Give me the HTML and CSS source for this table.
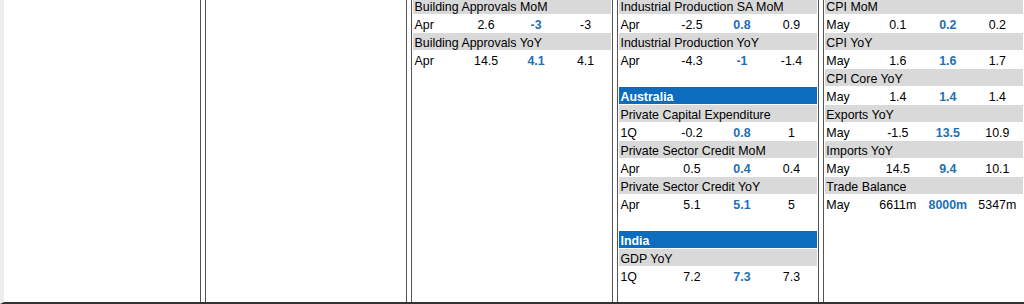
FILE: index.html
```html
<!DOCTYPE html>
<html>
<head>
<meta charset="utf-8">
<link rel="stylesheet" href="styles.css">
</head>
<body>
<div class="board">
  <div class="col col-first"></div>
  <div class="col"></div>
  <div class="col">
    <div class="stack">
      <div class="hd">Building Approvals MoM</div>
      <div class="dr"><span class="p">Apr</span><span>2.6</span><span class="f">-3</span><span>-3</span></div>
      <div class="hd">Building Approvals YoY</div>
      <div class="dr"><span class="p">Apr</span><span>14.5</span><span class="f">4.1</span><span>4.1</span></div>
    </div>
  </div>
  <div class="col">
    <div class="stack">
      <div class="hd">Industrial Production SA MoM</div>
      <div class="dr"><span class="p">Apr</span><span>-2.5</span><span class="f">0.8</span><span>0.9</span></div>
      <div class="hd">Industrial Production YoY</div>
      <div class="dr"><span class="p">Apr</span><span>-4.3</span><span class="f">-1</span><span>-1.4</span></div>
      <div class="sp"></div>
      <div class="rg">Australia</div>
      <div class="hd">Private Capital Expenditure</div>
      <div class="dr"><span class="p">1Q</span><span>-0.2</span><span class="f">0.8</span><span>1</span></div>
      <div class="hd">Private Sector Credit MoM</div>
      <div class="dr"><span class="p">Apr</span><span>0.5</span><span class="f">0.4</span><span>0.4</span></div>
      <div class="hd">Private Sector Credit YoY</div>
      <div class="dr"><span class="p">Apr</span><span>5.1</span><span class="f">5.1</span><span>5</span></div>
      <div class="sp"></div>
      <div class="rg">India</div>
      <div class="hd">GDP YoY</div>
      <div class="dr"><span class="p">1Q</span><span>7.2</span><span class="f">7.3</span><span>7.3</span></div>
    </div>
  </div>
  <div class="col col-last">
    <div class="stack">
      <div class="hd">CPI MoM</div>
      <div class="dr"><span class="p">May</span><span>0.1</span><span class="f">0.2</span><span>0.2</span></div>
      <div class="hd">CPI YoY</div>
      <div class="dr"><span class="p">May</span><span>1.6</span><span class="f">1.6</span><span>1.7</span></div>
      <div class="hd">CPI Core YoY</div>
      <div class="dr"><span class="p">May</span><span>1.4</span><span class="f">1.4</span><span>1.4</span></div>
      <div class="hd">Exports YoY</div>
      <div class="dr"><span class="p">May</span><span>-1.5</span><span class="f">13.5</span><span>10.9</span></div>
      <div class="hd">Imports YoY</div>
      <div class="dr"><span class="p">May</span><span>14.5</span><span class="f">9.4</span><span>10.1</span></div>
      <div class="hd">Trade Balance</div>
      <div class="dr"><span class="p">May</span><span>6611m</span><span class="f">8000m</span><span>5347m</span></div>
    </div>
  </div>
</div>
</body>
</html>
```
FILE: styles.css
```css
html, body {
  margin: 0;
  padding: 0;
  height: 304px;
  overflow: hidden;
  background: #fff;
}
body {
  font-family: "Liberation Sans", Arial, sans-serif;
  font-size: 12.4px;
  color: #000;
}
.board {
  display: flex;
  gap: 4.2px;
  height: 302px;
  border-bottom: 2px solid #333;
  border-left: 4px solid #ededed;
  overflow: hidden;
}
.col {
  box-sizing: border-box;
  flex: none;
  width: 201.7px;
  height: 302px;
  border-left: 1px solid #555;
  border-right: 1px solid #555;
  padding: 0 1px;
}
.col-first {
  width: 197px;
  border-left: none;
}
.col-last {
  width: 215px;
}
.col-last .stack {
  width: 197.7px;
}
.stack {
  margin-top: -3px;
}
.hd {
  height: 17px;
  margin-bottom: 1px;
  background: #d9d9d9;
  line-height: 20px;
  padding-left: 1.5px;
  white-space: nowrap;
}
.dr {
  display: grid;
  grid-template-columns: 48px 50px 50px 49px;
  height: 17px;
  margin-bottom: 1px;
  line-height: 20px;
  white-space: nowrap;
}
.dr span {
  text-align: center;
}
.dr .p {
  text-align: left;
  padding-left: 1.5px;
}
.f {
  color: #1d6fb8;
  font-weight: bold;
}
.rg {
  height: 17px;
  margin-bottom: 1px;
  background: #0c6cbd;
  color: #fff;
  font-weight: bold;
  line-height: 21px;
  padding-left: 1.5px;
}
.sp {
  height: 18px;
}
```
